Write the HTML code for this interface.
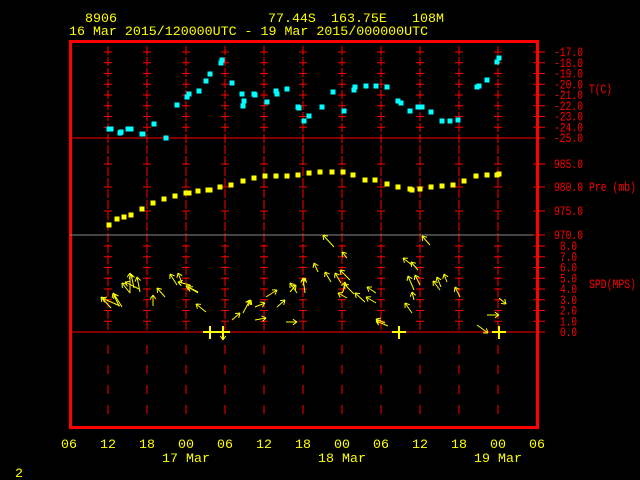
<!DOCTYPE html>
<html><head><meta charset="utf-8"><style>
html,body{margin:0;padding:0;background:#000;}
body{width:640px;height:480px;overflow:hidden;}
svg{display:block}
text{font-family:"Liberation Mono",monospace;font-size:13.3px;white-space:pre;}
text.r{font-size:12.5px;}
</style></head><body>
<svg id="s" width="640" height="480" viewBox="0 0 640 480" xmlns="http://www.w3.org/2000/svg" xml:space="preserve">
<g fill="#ffff00">
<text x="85" y="22">8906</text>
<text x="268" y="22">77.44S</text>
<text x="331" y="22">163.75E</text>
<text x="412" y="22">108M</text>
<text x="69" y="35">16 Mar 2015/120000UTC - 19 Mar 2015/000000UTC</text>
<text x="15" y="477">2</text>
</g>
<g id="g"></g>
</svg>
<script>
var g=document.getElementById('g'),h='';
function L(x1,y1,x2,y2,c,w,d){h+='<line x1="'+x1+'" y1="'+y1+'" x2="'+x2+'" y2="'+y2+'" stroke="'+c+'" stroke-width="'+(w||1)+'"'+(d?' stroke-dasharray="'+d+'"':'')+'/>';}
function T(x,y,s,c,a,cl){h+='<text x="'+x+'" y="'+y+'" fill="'+c+'"'+(a?' text-anchor="'+a+'"':'')+(cl?' class="'+cl+'" textLength="'+(s.length*6-1)+'" lengthAdjust="spacingAndGlyphs"':'')+'>'+s+'</text>';}
var R='#ff0000';
var xs=[108,147,186,225,264,303,342,381,420,459,498];
var tl=[],sl=[],pl=[164,187,211];
for(var k=0;k<9;k++){tl.push(52+10.75*k);sl.push(246+10.75*k);}
xs.forEach(function(x){
 L(x,46,x,332,R,1,'9,2');
 L(x,345,x,425,R,1,'9,11');
 tl.slice(0,8).concat(pl).concat(sl.slice(0,8)).forEach(function(y){L(x-4,y,x+4,y,R,1);});
});
h+='<rect x="70.5" y="41.5" width="467" height="386" fill="none" stroke="'+R+'" stroke-width="3"/>';
L(70,138,538,138,R,1);L(70,235,538,235,'#888',1);L(70,332,538,332,R,1);
var tv=['-17.0','-18.0','-19.0','-20.0','-21.0','-22.0','-23.0','-24.0','-25.0'];
tl.forEach(function(y,i){L(533,y,545,y,R,1);T(554,y+4,tv[i],R,0,'r');});
[['985.0',164],['980.0',187],['975.0',211],['970.0',235]].forEach(function(p){L(533,p[1],545,p[1],R,1);T(554,p[1]+4,p[0],R,0,'r');});
sl.forEach(function(y,i){L(533,y,545,y,R,1);T(560,y+4,(8-i)+'.0',R,0,'r');});
T(589,93,'T(C)',R,0,'r');T(589,191,'Pre (mb)',R,0,'r');T(589,288,'SPD(MPS)',R,0,'r');
var lab=['06','12','18','00','06','12','18','00','06','12','18','00','06'];
lab.forEach(function(s,i){T(69+39*i,448,s,'#ffff00','middle');});
T(186,462,'17 Mar','#ffff00','middle');T(342,462,'18 Mar','#ffff00','middle');T(498,462,'19 Mar','#ffff00','middle');
var cy=[[109,129],[111,129],[120,133],[121,132],[128,129],[131,129],[142,134],[143,134],[154,124],[166,138],[177,105],[187,97],[189,94],[199,91],[206,81],[210,74],[221,63],[222,60],[232,83],[243,106],[244,101],[242,94],[254,94],[255,95],[267,102],[276,91],[277,94],[287,89],[298,107],[299,108],[304,121],[309,116],[322,107],[333,92],[344,111],[354,90],[355,87],[366,86],[376,86],[387,87],[398,101],[401,103],[410,111],[418,107],[422,107],[431,112],[442,121],[450,121],[458,120],[477,87],[479,86],[487,80],[497,62],[499,58]];
cy.forEach(function(p){h+='<rect x="'+(p[0]-2.5)+'" y="'+(p[1]-2.5)+'" width="5" height="5" fill="#00ffff"/>';});
var yp=[[109,225],[117,219],[124,217],[131,215],[142,209],[153,203],[164,199],[175,196],[186,193],[189,193],[198,191],[208,190],[210,190],[220,187],[231,185],[243,181],[254,178],[265,176],[276,176],[287,176],[298,175],[309,173],[320,172],[332,172],[343,172],[353,175],[365,180],[375,180],[387,184],[398,187],[410,189],[412,190],[420,189],[431,187],[442,186],[453,185],[464,181],[476,176],[487,175],[497,175],[499,174]];
yp.forEach(function(p){h+='<rect x="'+(p[0]-2.5)+'" y="'+(p[1]-2.5)+'" width="5" height="5" fill="#ffff00"/>';});
var ar=[[111,308,101,297],[120,306,102,298],[119,306,113,293],[122,307,114,294],[130,293,122,283],[134,288,131,274],[130,293,130,273],[140,292,137,277],[139,289,125,282],[153,306,153,295],[165,297,157,288],[177,285,170,274],[182,283,178,273],[190,285,178,282],[198,292,186,286],[198,293,188,287],[206,312,196,304],[223,330,223,340],[232,320,240,313],[243,313,250,300],[248,306,251,300],[255,307,265,303],[255,320,266,318],[266,297,277,290],[277,307,285,300],[290,292,296,285],[297,293,290,283],[303,285,305,278],[286,322,297,322],[305,293,303,278],[318,272,314,263],[331,282,325,272],[341,283,335,273],[343,292,345,282],[354,294,344,284],[365,302,355,293],[376,303,366,297],[376,293,367,287],[388,326,376,321],[385,323,376,319],[334,247,323,235],[347,258,342,252],[350,280,340,270],[412,265,403,258],[414,290,408,276],[420,285,415,275],[441,287,437,277],[347,298,338,293],[430,245,422,236],[412,313,405,303],[440,290,433,281],[460,297,455,287],[418,270,411,262],[477,325,488,333],[487,315,499,315],[499,298,506,304],[414,300,412,292],[447,282,444,274]];
ar.forEach(function(a){var dx=a[2]-a[0],dy=a[3]-a[1],l=Math.sqrt(dx*dx+dy*dy),ux=dx/l,uy=dy/l,s=5;
 L(a[0],a[1],a[2],a[3],'#ffff00',1);
 var c=Math.cos(0.6),n=Math.sin(0.6);
 L(a[2],a[3],a[2]-s*(ux*c-uy*n),a[3]-s*(uy*c+ux*n),'#ffff00',1);
 L(a[2],a[3],a[2]-s*(ux*c+uy*n),a[3]-s*(uy*c-ux*n),'#ffff00',1);});
[210,223,399,499].forEach(function(x){L(x-7,332,x+7,332,'#ffff00',2);L(x,326,x,339,'#ffff00',2);});
g.innerHTML=h;
</script>
</body></html>
